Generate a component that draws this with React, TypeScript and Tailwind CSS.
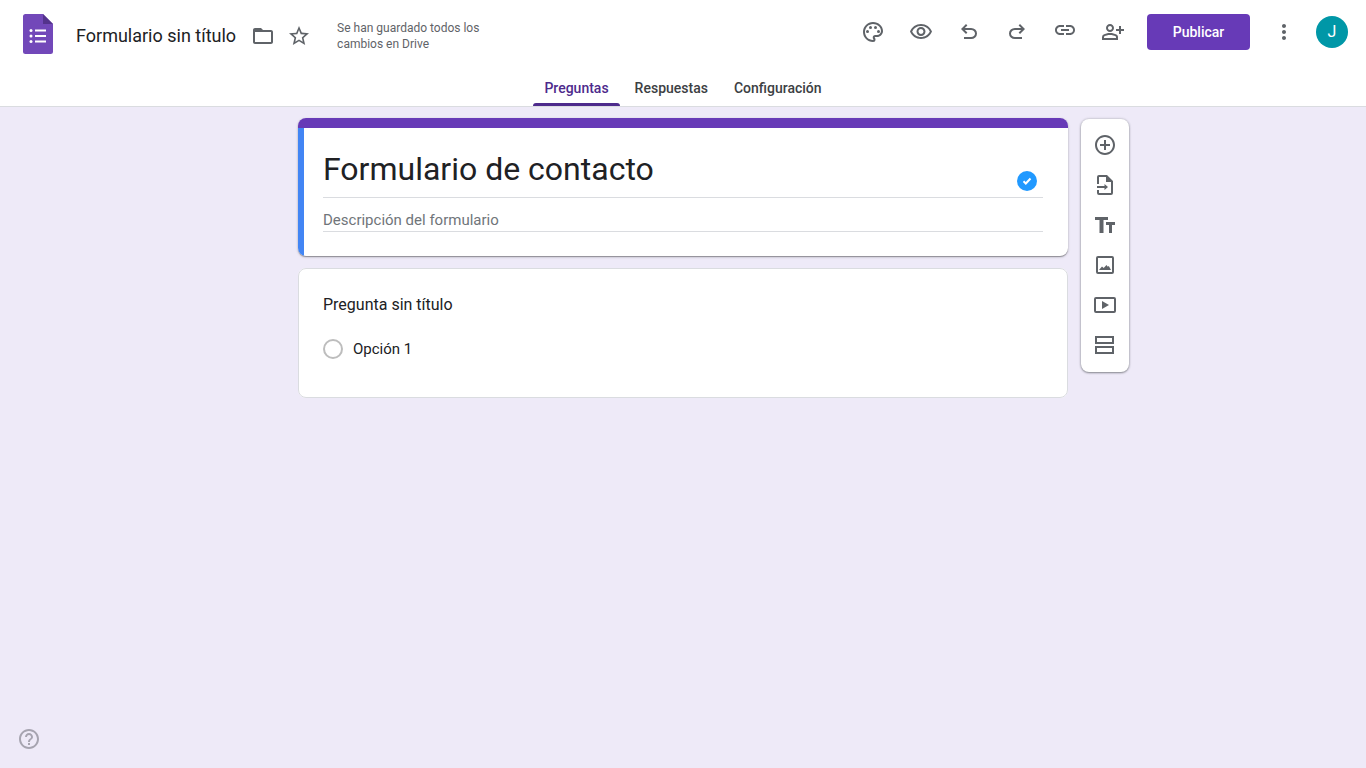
import { useState } from 'react';
import type { ReactNode } from 'react';
import {
  MdAddCircleOutline,
  MdFolderOpen,
  MdHelpOutline,
  MdLink,
  MdMoreVert,
  MdOutlinePalette,
  MdOutlinePersonAddAlt,
  MdOutlineVisibility,
  MdStarBorder,
} from 'react-icons/md';

type Tab = 'questions' | 'responses' | 'settings';
const TABS: { key: Tab; label: string }[] = [
  { key: 'questions', label: 'Preguntas' },
  { key: 'responses', label: 'Respuestas' },
  { key: 'settings', label: 'Configuración' },
];

function Icon({ children }: { children: ReactNode }) {
  return (
    <svg viewBox="0 0 24 24" className="size-6" fill="currentColor" aria-hidden="true">
      {children}
    </svg>
  );
}

const UNDO_PATH =
  'M7 19v-2h7.1q1.575 0 2.738-1T18 13.5 16.838 11 14.1 10H7.8l2.6 2.6L9 14 4 9l5-5 1.4 1.4L7.8 8h6.3q2.425 0 4.163 1.575T20 13.5t-1.737 3.925T14.1 19z';

const HEADER_ACTIONS: { label: string; icon: ReactNode; raised?: boolean }[] = [
  { label: 'Personalizar tema', icon: <MdOutlinePalette className="size-6" /> },
  { label: 'Vista previa', icon: <MdOutlineVisibility className="size-6" /> },
  { label: 'Deshacer', icon: <Icon><path d={UNDO_PATH} /></Icon> },
  { label: 'Rehacer', icon: <Icon><path d={UNDO_PATH} transform="matrix(-1 0 0 1 24 0)" /></Icon> },
  { label: 'Copiar vínculo', icon: <MdLink className="size-6" />, raised: true },
  { label: 'Compartir', icon: <MdOutlinePersonAddAlt className="size-6" /> },
];

const TOOLS: { label: string; icon: ReactNode }[] = [
  { label: 'Agregar pregunta', icon: <MdAddCircleOutline className="size-6" /> },
  {
    label: 'Importar preguntas',
    icon: (
      <Icon>
        <path d="M14 2H6a2 2 0 0 0-2 2v7h2V4h7v5h5v11H6v-3H4v3a2 2 0 0 0 2 2h12a2 2 0 0 0 2-2V8z" />
        <path d="M4 13h7.500v-2l3.500 3-3.500 3v-2H4z" />
      </Icon>
    ),
  },
  {
    label: 'Agregar título y descripción',
    icon: (
      <Icon>
        <path d="M2 4h13v3h-4.500v13h-4V7H2zM13 9h9v3h-3v8h-3v-8h-3z" />
      </Icon>
    ),
  },
  {
    label: 'Agregar imagen',
    icon: (
      <Icon>
        <path d="M5 3a2 2 0 0 0-2 2v14a2 2 0 0 0 2 2h14a2 2 0 0 0 2-2V5a2 2 0 0 0-2-2zm0 2h14v14H5z" />
        <path d="M6 17l3-3.500 1.700 1.500 2.800-3 1.300 1.700 1-.7 2.200 4z" />
      </Icon>
    ),
  },
  {
    label: 'Agregar video',
    icon: (
      <Icon>
        <path d="M3 4a2 2 0 0 0-2 2v12a2 2 0 0 0 2 2h18a2 2 0 0 0 2-2V6a2 2 0 0 0-2-2zm0 2h18v12H3z" />
        <path d="M9 8v8l7-4z" />
      </Icon>
    ),
  },
  {
    label: 'Agregar sección',
    icon: (
      <Icon>
        <path d="M2 3v8h19V3zm2 2h15v4H4zM2 13v8h19v-8zm2 2h15v4H4z" />
      </Icon>
    ),
  },
];

function FormsLogo() {
  return (
    <svg viewBox="0 0 30 40" className="h-10 w-[30px]" role="img" aria-label="Formularios">
      <path d="M2.500 0H20l10 10v27.500a2.500 2.500 0 0 1-2.500 2.500h-25A2.500 2.500 0 0 1 0 37.500v-35A2.500 2.500 0 0 1 2.500 0z" fill="#7248b9" />
      <path d="M20 0l10 10H20z" fill="#54338c" />
      <g fill="#fff">
        <circle cx="8" cy="16.500" r="1.500" />
        <circle cx="8" cy="22" r="1.500" />
        <circle cx="8" cy="27.500" r="1.500" />
        <path d="M12 15.500h11v2H12zM12 21h11v2H12zM12 26.500h11v2H12z" />
      </g>
    </svg>
  );
}

function Header() {
  const [name, setName] = useState('Formulario sin título');
  const [activeTab, setActiveTab] = useState<Tab>('questions');

  return (
    <header className="border-b border-[#dadce0] bg-white">
      <div className="flex h-[70px] items-start justify-between pr-[18px] pl-[23px]">
        <div className="flex items-start pt-[14px]">
          <a href="#inicio" aria-label="Pantalla principal">
            <FormsLogo />
          </a>
          <div className="flex h-11 items-center">
            <input
              type="text"
              aria-label="Nombre del documento"
              value={name}
              onChange={(e) => setName(e.target.value)}
              className="ml-[23px] field-sizing-content text-lg text-[#202124] outline-none"
            />
            <div className="ml-[15px] flex gap-3 text-[#5f6368]">
              <button type="button" aria-label="Mover a carpeta">
                <MdFolderOpen className="size-6" />
              </button>
              <button type="button" aria-label="Destacar">
                <MdStarBorder className="size-6" />
              </button>
            </div>
            <p className="ml-[26px] w-[160px] text-xs leading-4 text-[#5f6368]">
              Se han guardado todos los cambios en Drive
            </p>
          </div>
        </div>

        <div className="flex items-center pt-[14px]">
          <div className="flex items-center gap-6 text-[#5f6368]">
            {HEADER_ACTIONS.map((action) => (
              <button
                key={action.label}
                type="button"
                aria-label={action.label}
                className={action.raised ? 'pb-1' : ''}
              >
                {action.icon}
              </button>
            ))}
          </div>
          <button
            type="button"
            className="ml-[22px] h-9 w-[103px] rounded bg-[#673ab7] text-sm font-medium text-white"
          >
            Publicar
          </button>
          <button type="button" aria-label="Más opciones" className="ml-[22px] text-[#5f6368]">
            <MdMoreVert className="size-6" />
          </button>
          <button
            type="button"
            aria-label="Cuenta de Google"
            className="ml-5 size-8 rounded-full bg-[#0097a7] text-base text-white"
          >
            J
          </button>
        </div>
      </div>

      <div role="tablist" aria-label="Secciones del formulario" className="flex justify-center">
        {TABS.map((tab) => {
          const selected = tab.key === activeTab;
          return (
            <button
              key={tab.key}
              role="tab"
              type="button"
              aria-selected={selected}
              onClick={() => setActiveTab(tab.key)}
              className={`relative h-9 px-[13px] text-sm font-medium ${selected ? 'text-[#4d2a8c]' : 'text-[#3c4043]'}`}
            >
              {tab.label}
              {selected && <span className="absolute inset-x-0.5 bottom-0 h-[3px] rounded-t-[3px] bg-[#4d2a8c]" />}
            </button>
          );
        })}
      </div>
    </header>
  );
}

function TitleCard() {
  const [title, setTitle] = useState('Formulario de contacto');
  const [description, setDescription] = useState('');

  return (
    <section className="overflow-hidden rounded-lg bg-white shadow-[0_1px_1px_rgba(0,0,0,0.3),0_1px_3px_rgba(0,0,0,0.2)]">
      <div className="h-[10px] bg-[#673ab7]" />
      <div className="border-l-[6px] border-[#4285f4] pt-5 pr-[25px] pb-6 pl-[19px]">
        <div className="relative">
          <input
            type="text"
            aria-label="Título del formulario"
            value={title}
            onChange={(e) => setTitle(e.target.value)}
            className="block h-[50px] w-full border-b border-[#dadce0] pb-2 text-[32px] text-[#202124] outline-none"
          />
          <span className="absolute right-1.5 bottom-[7px] flex size-5 items-center justify-center rounded-full bg-[#2199ff]">
            <svg viewBox="0 0 20 20" className="size-5" fill="none" stroke="#fff" strokeWidth="2" aria-hidden="true">
              <path d="M6.500 10.300l2.300 2.200 4.700-5" />
            </svg>
          </span>
        </div>
        <input
          type="text"
          aria-label="Descripción del formulario"
          placeholder="Descripción del formulario"
          value={description}
          onChange={(e) => setDescription(e.target.value)}
          className="mt-[10px] block h-6 w-full border-b border-[#dadce0] text-[15px] outline-none placeholder:text-[#70757a]"
        />
      </div>
    </section>
  );
}

function QuestionCard() {
  return (
    <fieldset className="rounded-lg border border-[#dadce0] bg-white px-6 pt-6 pb-[38px] text-[#202124]">
      <legend className="float-left w-full text-base leading-6">Pregunta sin título</legend>
      <label className="clear-both flex items-center gap-[10px] pt-[22px] text-[15px] leading-5">
        <input
          type="radio"
          name="pregunta"
          className="size-5 appearance-none rounded-full border-2 border-[#bdbdbd]"
        />
        Opción 1
      </label>
    </fieldset>
  );
}

function Toolbar() {
  return (
    <div
      role="toolbar"
      aria-label="Agregar elementos"
      aria-orientation="vertical"
      className="mt-px ml-[13px] flex w-12 flex-col rounded-lg bg-white pt-1.5 pb-[7px] text-[#5f6368] shadow-[0_1px_2px_rgba(60,64,67,0.5),0_0_2px_1px_rgba(60,64,67,0.15)]"
    >
      {TOOLS.map((tool) => (
        <button
          key={tool.label}
          type="button"
          aria-label={tool.label}
          className="flex h-10 items-center justify-center"
        >
          {tool.icon}
        </button>
      ))}
    </div>
  );
}

export default function App() {
  return (
    <div className="flex min-h-screen flex-col bg-[#eeeaf8] font-['Roboto',sans-serif]">
      <Header />
      <main className="grid grid-cols-[1fr_minmax(0,770px)_1fr] items-start pt-[11px]">
        <div className="col-start-2 flex flex-col gap-3">
          <TitleCard />
          <QuestionCard />
        </div>
        <Toolbar />
      </main>
      <button type="button" aria-label="Ayuda" className="fixed bottom-[17px] left-[17px] text-[#a6a4b0]">
        <MdHelpOutline className="size-6" />
      </button>
    </div>
  );
}
